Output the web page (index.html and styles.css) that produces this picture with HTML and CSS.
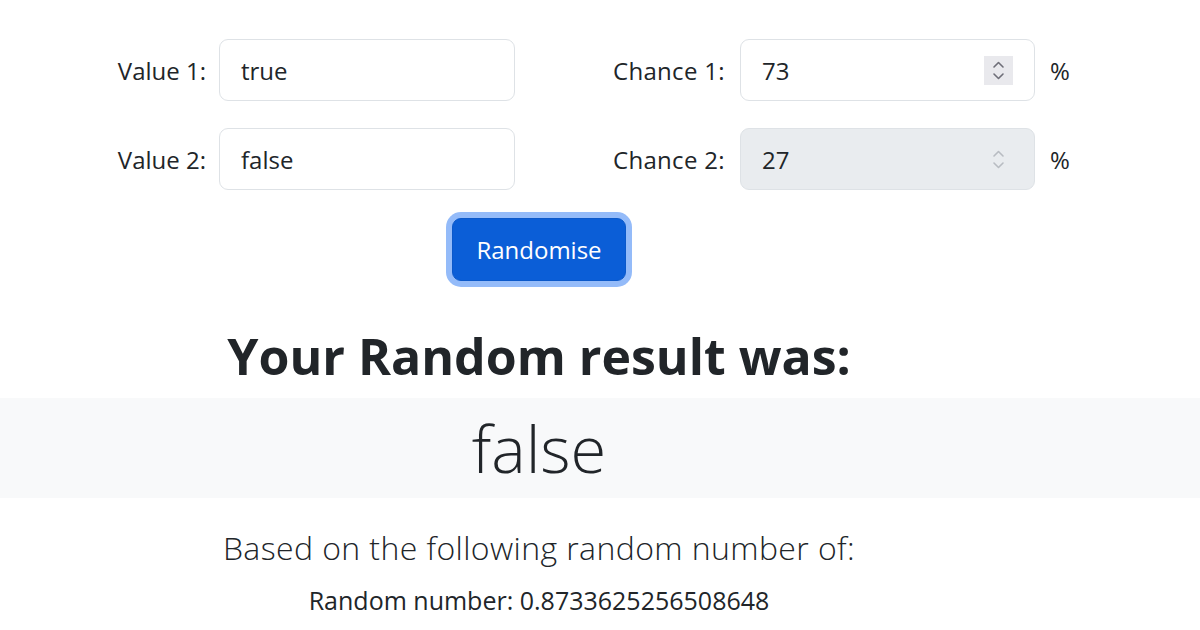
FILE: index.html
```html
<!DOCTYPE html>
<html lang="en">
<head>
<meta charset="utf-8">
<title>Random result</title>
<link rel="stylesheet" href="styles.css">
</head>
<body>
<div class="main">
  <div class="form">
    <div class="row">
      <label class="lbl-a">Value 1:</label>
      <div class="input input-a">true</div>
      <label class="lbl-b">Chance 1:</label>
      <div class="input input-b"><span class="val">73</span><span class="spin hover"><svg width="13" height="23" viewBox="0 0 13 23"><path d="M2 8 L6.5 3.5 L11 8 M2 15 L6.5 19.5 L11 15" fill="none" stroke="#6e6e78" stroke-width="1.6" stroke-linecap="round" stroke-linejoin="round"/></svg></span></div>
      <span class="suffix">%</span>
    </div>
    <div class="row">
      <label class="lbl-a">Value 2:</label>
      <div class="input input-a">false</div>
      <label class="lbl-b">Chance 2:</label>
      <div class="input input-b disabled"><span class="val">27</span><span class="spin"><svg width="13" height="23" viewBox="0 0 13 23"><path d="M2 8 L6.5 3.5 L11 8 M2 15 L6.5 19.5 L11 15" fill="none" stroke="#b8bcc2" stroke-width="1.6" stroke-linecap="round" stroke-linejoin="round"/></svg></span></div>
      <span class="suffix">%</span>
    </div>
  </div>
  <div class="actions">
    <button class="btn" type="button">Randomise</button>
  </div>
  <h1 class="title">Your Random result was:</h1>
</div>
<div class="band">
  <div class="band-inner">false</div>
</div>
<div class="main">
  <p class="lead">Based on the following random number of:</p>
  <p class="small">Random number: 0.8733625256508648</p>
</div>
</body>
</html>
```
FILE: styles.css
```css
html, body {
  margin: 0;
  padding: 0;
  background: #ffffff;
}
body {
  font-family: "Open Sans", "Noto Sans", "Liberation Sans", sans-serif;
  color: #212529;
  font-size: 24px;
}
.main {
  width: 1078px;
}
.form {
  padding-top: 39px;
}
.row {
  display: flex;
  align-items: center;
  height: 62px;
}
.row + .row {
  margin-top: 27px;
}
.lbl-a {
  width: 98px;
  margin-left: 108px;
  margin-right: 13px;
  text-align: right;
  white-space: nowrap;
}
.lbl-b {
  width: 113px;
  margin-left: 98px;
  margin-right: 14px;
  white-space: nowrap;
  letter-spacing: 0.3px;
}
.input {
  box-sizing: border-box;
  height: 62px;
  border: 1px solid #dee2e6;
  border-radius: 9px;
  background: #fff;
  padding: 0 21px;
  display: flex;
  align-items: center;
}
.input-a {
  width: 296px;
}
.input-b {
  width: 295px;
  padding-right: 21px;
}
.input.disabled {
  background: #e9ecef;
}
.val {
  flex: 1;
}
.spin {
  width: 29px;
  height: 29px;
  display: flex;
  align-items: center;
  justify-content: center;
}
.spin.hover {
  background: #e9e9ed;
}
.suffix {
  margin-left: 15px;
}
.actions {
  display: flex;
  justify-content: center;
  margin-top: 28px;
}
.btn {
  font-family: inherit;
  font-size: 24px;
  color: #fff;
  background: #0b5ed7;
  border: 1px solid #0a58ca;
  border-radius: 9px;
  width: 174px;
  height: 63px;
  padding: 0;
  box-shadow: 0 0 0 6px #94bbf9;
}
.title {
  text-align: center;
  font-size: 50px;
  font-weight: 700;
  line-height: 61px;
  margin: 45px 0 0;
}
.band {
  background: #f8f9fa;
  height: 100px;
  margin-top: 11px;
}
.band-inner {
  width: 1078px;
  text-align: center;
  font-size: 65px;
  font-weight: 300;
  line-height: 100px;
}
.lead {
  text-align: center;
  font-size: 32px;
  font-weight: 300;
  letter-spacing: 0.4px;
  line-height: 45px;
  margin: 27px 0 0;
}
.small {
  text-align: center;
  font-size: 25px;
  line-height: 36px;
  margin: 12px 0 0;
}
```
